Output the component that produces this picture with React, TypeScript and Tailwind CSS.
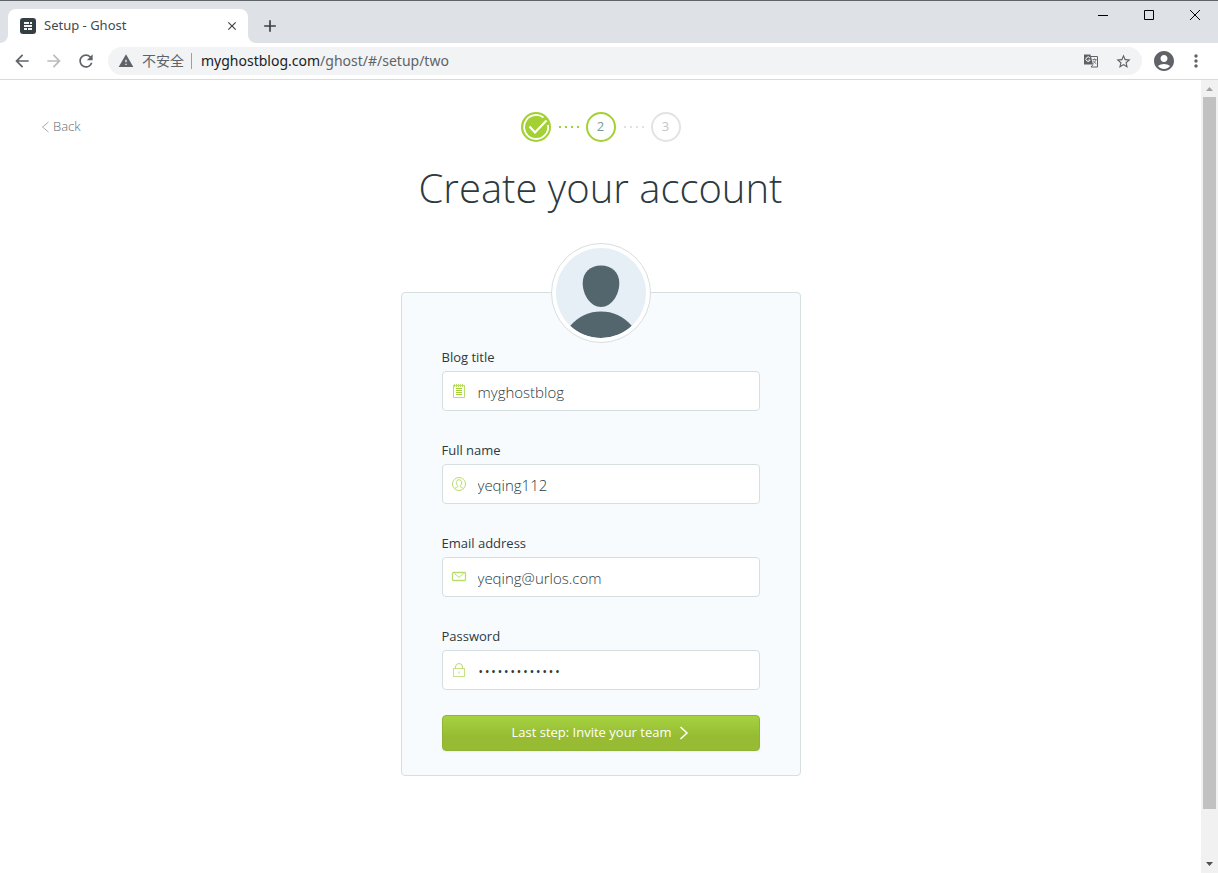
import { useState } from "react"
import type { ReactNode } from "react"
import {
  MdAccountCircle,
  MdAdd,
  MdArrowBack,
  MdArrowForward,
  MdClose,
  MdMoreVert,
  MdRefresh,
  MdStarBorder,
  MdWarning,
} from "react-icons/md"

const fields = [
  { id: "blog-title", label: "Blog title", type: "text", size: "text-[15px]", icon: <NotepadIcon /> },
  { id: "full-name", label: "Full name", type: "text", size: "text-[15px]", icon: <UserIcon /> },
  { id: "email", label: "Email address", type: "email", size: "text-[15px]", icon: <MailIcon /> },
  { id: "password", label: "Password", type: "password", size: "text-[17px]", icon: <LockIcon /> },
]

function LineIcon({ children }: { children: ReactNode }) {
  return (
    <svg className="w-4 h-4" viewBox="0 0 16 16" fill="none" stroke="#b9dc6c" strokeWidth={1}>
      {children}
    </svg>
  )
}

function NotepadIcon() {
  return (
    <LineIcon>
      <path d="M2.5 2v12.500h11V2" />
      <path d="M2 2.500h12M3.500 1v3M5.500 1v3M7.500 1v3M9.500 1v3M11.500 1v3" />
      <path d="M5 5.500h6M5 7.500h6M5 9.500h6M5 11.500h6" stroke="#a3d133" />
    </LineIcon>
  )
}

function UserIcon() {
  return (
    <LineIcon>
      <circle cx="8" cy="8" r="6.500" />
      <path d="M4 12.500c0-1.300 2.800-.8 2.800-2.200C6.800 9.400 5.300 8.800 5.300 6.600 5.300 4.800 6.400 3.800 8 3.800s2.700 1 2.700 2.800c0 2.200-1.500 2.800-1.500 3.700 0 1.400 2.800.9 2.800 2.200" />
    </LineIcon>
  )
}

function MailIcon() {
  return (
    <LineIcon>
      <rect x="1.500" y="3.500" width="13" height="8" rx="1" strokeWidth={1.300} />
      <path d="M3.500 4.500L8 8.500l4.500-4" />
    </LineIcon>
  )
}

function LockIcon() {
  return (
    <LineIcon>
      <rect x="2.500" y="6.500" width="11" height="8" strokeOpacity={0.8} />
      <path d="M4.500 6.500V5a3.500 3.500 0 0 1 7 0v1.500M8 9.500v2" />
    </LineIcon>
  )
}

function TranslateIcon() {
  return (
    <svg className="w-4 h-4" viewBox="0 0 16 16" fill="none">
      <path d="M1 1.500h6.500l2.500 10H1z" fill="#5f6368" />
      <path d="M8 3.500h6.500v10.500H8l2-2.500" stroke="#5f6368" />
      <path d="M7 5A2.200 2.200 0 1 0 7.200 7H5.300" stroke="#fff" />
      <path d="M9.500 6.500h4M11.500 5.500v1M13 6.500c-.5 2-1.500 3-2.800 4M10.300 7.500c.6 1.500 1.600 2.500 3 3.300" stroke="#5f6368" strokeWidth={0.8} />
    </svg>
  )
}

function GhostFavicon() {
  return (
    <svg className="w-4 h-4" viewBox="0 0 16 16">
      <rect width="16" height="16" rx="3" fill="#343f44" />
      <path d="M4 4h5v2H4zM10 4h2v2h-2zM4 7h8v2H4zM4 10h3v2H4zM8 10h4v2H8z" fill="#f3f5f5" />
    </svg>
  )
}

function BrowserChrome() {
  return (
    <header className="shrink-0 font-['Noto_Sans','Noto_Sans_CJK_SC',sans-serif]">
      <div className="flex h-[43px] items-end border-t border-[#606367] bg-[#dee1e6]">
        <svg className="h-2 w-2" viewBox="0 0 8 8">
          <path d="M8 0v8H0a8 8 0 0 0 8-8z" fill="#fff" />
        </svg>
        <div className="flex h-[34px] w-60 items-center rounded-t-lg bg-white pl-3 pr-2">
          <GhostFavicon />
          <span className="ml-2 flex-1 text-[13px] text-[#45494d]">Setup - Ghost</span>
          <button aria-label="Close tab" className="flex h-4 w-4 items-center justify-center text-[#3c4043]">
            <MdClose size={14} />
          </button>
        </div>
        <svg className="h-2 w-2" viewBox="0 0 8 8">
          <path d="M0 0v8h8a8 8 0 0 1-8-8z" fill="#fff" />
        </svg>
        <button aria-label="New tab" className="mb-[7px] ml-1 text-[#3c4043]">
          <MdAdd size={20} />
        </button>
        <div className="ml-auto flex self-start">
          <button aria-label="Minimize" className="flex h-7 w-[46px] items-center justify-center">
            <svg className="h-[11px] w-[11px]" viewBox="0 0 11 11" stroke="#000">
              <path d="M0 5.500h10" />
            </svg>
          </button>
          <button aria-label="Maximize" className="flex h-7 w-[46px] items-center justify-center">
            <svg className="h-[11px] w-[11px]" viewBox="0 0 11 11" fill="none" stroke="#000">
              <path d="M.5.500h9v9h-9z" />
            </svg>
          </button>
          <button aria-label="Close" className="flex h-7 w-[46px] items-center justify-center">
            <svg className="h-[11px] w-[11px]" viewBox="0 0 11 11" stroke="#000">
              <path d="M0 0l10 10M10 0L0 10" />
            </svg>
          </button>
        </div>
      </div>
      <div className="flex h-[37px] items-center border-b border-[#d9dadc] bg-white px-3 text-[#5f6368]">
        <button aria-label="Go back">
          <MdArrowBack size={20} />
        </button>
        <button aria-label="Go forward" className="ml-3 text-[#babcbe]">
          <MdArrowForward size={20} />
        </button>
        <button aria-label="Reload" className="ml-3">
          <MdRefresh size={20} />
        </button>
        <div className="ml-3 flex h-7 flex-1 items-center rounded-full bg-[#f1f3f4] px-2.5">
          <MdWarning size={16} />
          <span className="ml-2 text-sm">不安全</span>
          <span className="ml-[7px] h-4 w-px bg-[#9aa0a6]" />
          <span className="ml-[9px] flex-1 text-sm">
            <span className="text-[#202124]">myghostblog.com</span>/ghost/#/setup/two
          </span>
          <button aria-label="Translate this page">
            <TranslateIcon />
          </button>
          <button aria-label="Bookmark this page" className="ml-4">
            <MdStarBorder size={17} />
          </button>
        </div>
        <button aria-label="Profile" className="ml-2.5">
          <MdAccountCircle size={24} />
        </button>
        <button aria-label="Menu" className="ml-2.5">
          <MdMoreVert size={20} />
        </button>
      </div>
    </header>
  )
}

function StepDots({ active }: { active?: boolean }) {
  const color = active ? "bg-[#a3d133]" : "bg-[#e1e1e1]"
  return (
    <span className="flex w-[35px] justify-center gap-1 pl-0.5">
      {[0, 1, 2, 3].map((dot) => (
        <span key={dot} className={`h-0.5 w-0.5 ${color}`} />
      ))}
    </span>
  )
}

function Steps() {
  return (
    <nav aria-label="Setup steps" className="flex items-center text-[13px]">
      <svg className="h-[30px] w-[30px]" viewBox="0 0 30 30" fill="none">
        <circle cx="15" cy="15" r="15" fill="#a3d133" />
        <path d="M22.500 5.500A12 12 0 1 0 27 13" stroke="#fff" strokeWidth={1.800} />
        <path d="M8.500 14.500l5.500 6L25.500 8.500" stroke="#fff" strokeWidth={2.200} />
      </svg>
      <StepDots active />
      <span className="flex h-[30px] w-[30px] items-center justify-center rounded-full border-2 border-[#a3d133] text-[#7d9a92]">
        2
      </span>
      <StepDots />
      <span className="flex h-[30px] w-[30px] items-center justify-center rounded-full border-2 border-[#e3e3e3] text-[#c5c5c5]">
        3
      </span>
    </nav>
  )
}

function Avatar() {
  return (
    <div className="mx-auto h-[100px] w-[100px] rounded-full border border-[#d5dfe0] bg-white p-1">
      <svg className="h-full w-full" viewBox="0 0 90 90">
        <clipPath id="avatar-clip">
          <circle cx="45" cy="45" r="45" />
        </clipPath>
        <g clipPath="url(#avatar-clip)">
          <rect width="90" height="90" fill="#e6eef6" />
          <path d="M45 17.500c10.500 0 18.300 7 18.300 17.500C63.300 47 55.500 59 45 59S26.700 47 26.700 35C26.700 24.500 34.500 17.500 45 17.500z" fill="#54666d" />
          <path d="M14 78c9-10 19-14.500 31-14.500S67 68 76 78c-9 8-19 12-31 12s-22-4-31-12z" fill="#54666d" />
        </g>
      </svg>
    </div>
  )
}

function Scrollbar() {
  return (
    <div className="flex w-[17px] shrink-0 flex-col items-center bg-[#f1f1f1]">
      <button aria-label="Scroll up" className="flex h-[17px] items-center">
        <svg className="h-1 w-[7px]" viewBox="0 0 7 4" fill="#a3a3a3">
          <path d="M0 4l3.500-4L7 4z" />
        </svg>
      </button>
      <div className="w-[13px] flex-1 bg-[#c1c1c1]" />
      <button aria-label="Scroll down" className="mt-[47px] flex h-[17px] items-center pb-0.5">
        <svg className="h-1 w-[7px]" viewBox="0 0 7 4" fill="#505050">
          <path d="M0 0l3.500 4L7 0z" />
        </svg>
      </button>
    </div>
  )
}

export default function SetupPage() {
  const [values, setValues] = useState<Record<string, string>>({
    "blog-title": "myghostblog",
    "full-name": "yeqing112",
    email: "yeqing@urlos.com",
    password: "ghostblog1234",
  })

  return (
    <div className="flex min-h-screen flex-col bg-white">
      <BrowserChrome />
      <div className="flex flex-1">
        <main className="flex-1 pb-8 pt-8 font-['Open_Sans',sans-serif] text-[#2b3a40]">
          <div className="grid grid-cols-[1fr_auto_1fr] items-center px-10">
            <a href="#/setup/one" className="flex items-center gap-[3px] text-[13px] font-light text-[#5f6b70]">
              <svg className="h-3 w-2.5" viewBox="0 0 10 12" fill="none" stroke="#a5adb0">
                <path d="M8.500 1L2.500 6l6 5" />
              </svg>
              Back
            </a>
            <Steps />
          </div>

          <h1 className="mt-4 text-center text-[40px] font-light leading-[60px]">Create your account</h1>

          {/* Account form, the avatar hangs over its top edge */}
          <form
            className="mx-auto mt-[74px] w-[400px] rounded border border-[#d5dfe0] bg-[#f7fbfe] px-10 pb-6"
            onSubmit={(e) => e.preventDefault()}
          >
            <div className="-mt-[50px]">
              <Avatar />
            </div>
            <div className="mt-1 flex flex-col gap-[29px]">
              {fields.map((field) => (
                <div key={field.id}>
                  <label htmlFor={field.id} className="block pb-1 text-[13px] leading-5">
                    {field.label}
                  </label>
                  <div className="flex h-10 items-center rounded border border-[#d5dfe0] bg-white pl-2">
                    {field.icon}
                    <input
                      id={field.id}
                      type={field.type}
                      value={values[field.id]}
                      onChange={(e) => setValues({ ...values, [field.id]: e.target.value })}
                      className={`ml-[11px] h-full min-w-0 flex-1 bg-transparent pt-0.5 font-light outline-none ${field.size}`}
                    />
                  </div>
                </div>
              ))}
            </div>
            <button
              type="submit"
              className="mt-[25px] flex h-9 w-full items-center justify-center gap-2 rounded border border-[#90b237] bg-linear-to-b from-[#a6d240] to-[#97bc33] to-60% text-[13px] text-white shadow-xs"
            >
              Last step: Invite your team
              <svg className="h-3.5 w-2.5" viewBox="0 0 10 14" fill="none" stroke="#fff" strokeWidth={1.500}>
                <path d="M1.500 1l6.500 6-6.500 6" />
              </svg>
            </button>
          </form>
        </main>
        <Scrollbar />
      </div>
    </div>
  )
}
